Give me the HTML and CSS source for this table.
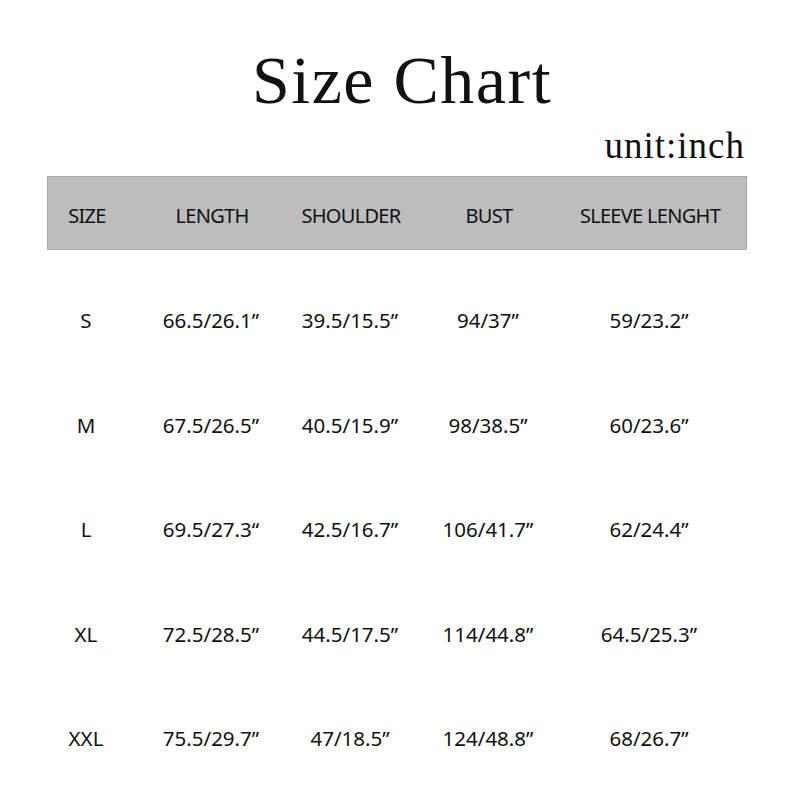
FILE: index.html
```html
<!DOCTYPE html>
<html>
<head>
<meta charset="utf-8">
<link rel="stylesheet" href="styles.css">
</head>
<body>
<div class="page">
  <h1 class="title">Size Chart</h1>
  <div class="unit">unit:inch</div>
  <div class="table">
    <div class="row head">
      <div class="cell">SIZE</div>
      <div class="cell">LENGTH</div>
      <div class="cell">SHOULDER</div>
      <div class="cell">BUST</div>
      <div class="cell">SLEEVE LENGHT</div>
    </div>
    <div class="body">
      <div class="row">
        <div class="cell">S</div>
        <div class="cell">66.5/26.1”</div>
        <div class="cell">39.5/15.5”</div>
        <div class="cell">94/37”</div>
        <div class="cell">59/23.2”</div>
      </div>
      <div class="row">
        <div class="cell">M</div>
        <div class="cell">67.5/26.5”</div>
        <div class="cell">40.5/15.9”</div>
        <div class="cell">98/38.5”</div>
        <div class="cell">60/23.6”</div>
      </div>
      <div class="row">
        <div class="cell">L</div>
        <div class="cell">69.5/27.3“</div>
        <div class="cell">42.5/16.7”</div>
        <div class="cell">106/41.7”</div>
        <div class="cell">62/24.4”</div>
      </div>
      <div class="row">
        <div class="cell">XL</div>
        <div class="cell">72.5/28.5”</div>
        <div class="cell">44.5/17.5”</div>
        <div class="cell">114/44.8”</div>
        <div class="cell">64.5/25.3”</div>
      </div>
      <div class="row">
        <div class="cell">XXL</div>
        <div class="cell">75.5/29.7”</div>
        <div class="cell">47/18.5”</div>
        <div class="cell">124/48.8”</div>
        <div class="cell">68/26.7”</div>
      </div>
    </div>
  </div>
</div>
</body>
</html>
```

FILE: styles.css
```css
html, body {
  margin: 0;
  padding: 0;
  background: #ffffff;
}
.page {
  width: 800px;
  height: 800px;
  box-sizing: border-box;
  padding: 0 0 0 47px;
  color: #111111;
  font-family: "Noto Sans", sans-serif;
}
.title {
  margin: 0;
  padding-top: 40px;
  padding-left: 10px;
  width: 690px;
  text-align: center;
  font-family: "Liberation Serif", serif;
  font-weight: 400;
  font-size: 68px;
  line-height: 80px;
  letter-spacing: 1.5px;
}
.unit {
  width: 698px;
  margin-top: 5px;
  text-align: right;
  font-family: "Liberation Serif", serif;
  font-size: 37px;
  line-height: 42px;
  letter-spacing: 1px;
}
.table {
  margin-top: 9px;
  width: 700px;
}
.row {
  display: grid;
  grid-template-columns: 78px 172px 106px 170px 152px;
  align-items: center;
  font-size: 20.5px;
}
.cell {
  display: flex;
  justify-content: center;
  white-space: nowrap;
}
.head {
  height: 72px;
  box-sizing: content-box;
  background: #bdbdbd;
  border: 1px solid #a8a8a8;
  font-size: 20px;
  letter-spacing: -0.7px;
  padding-top: 4px;
  height: 68px;
}
.body {
  padding-top: 18px;
}
.body .row {
  height: 104.5px;
}
```
